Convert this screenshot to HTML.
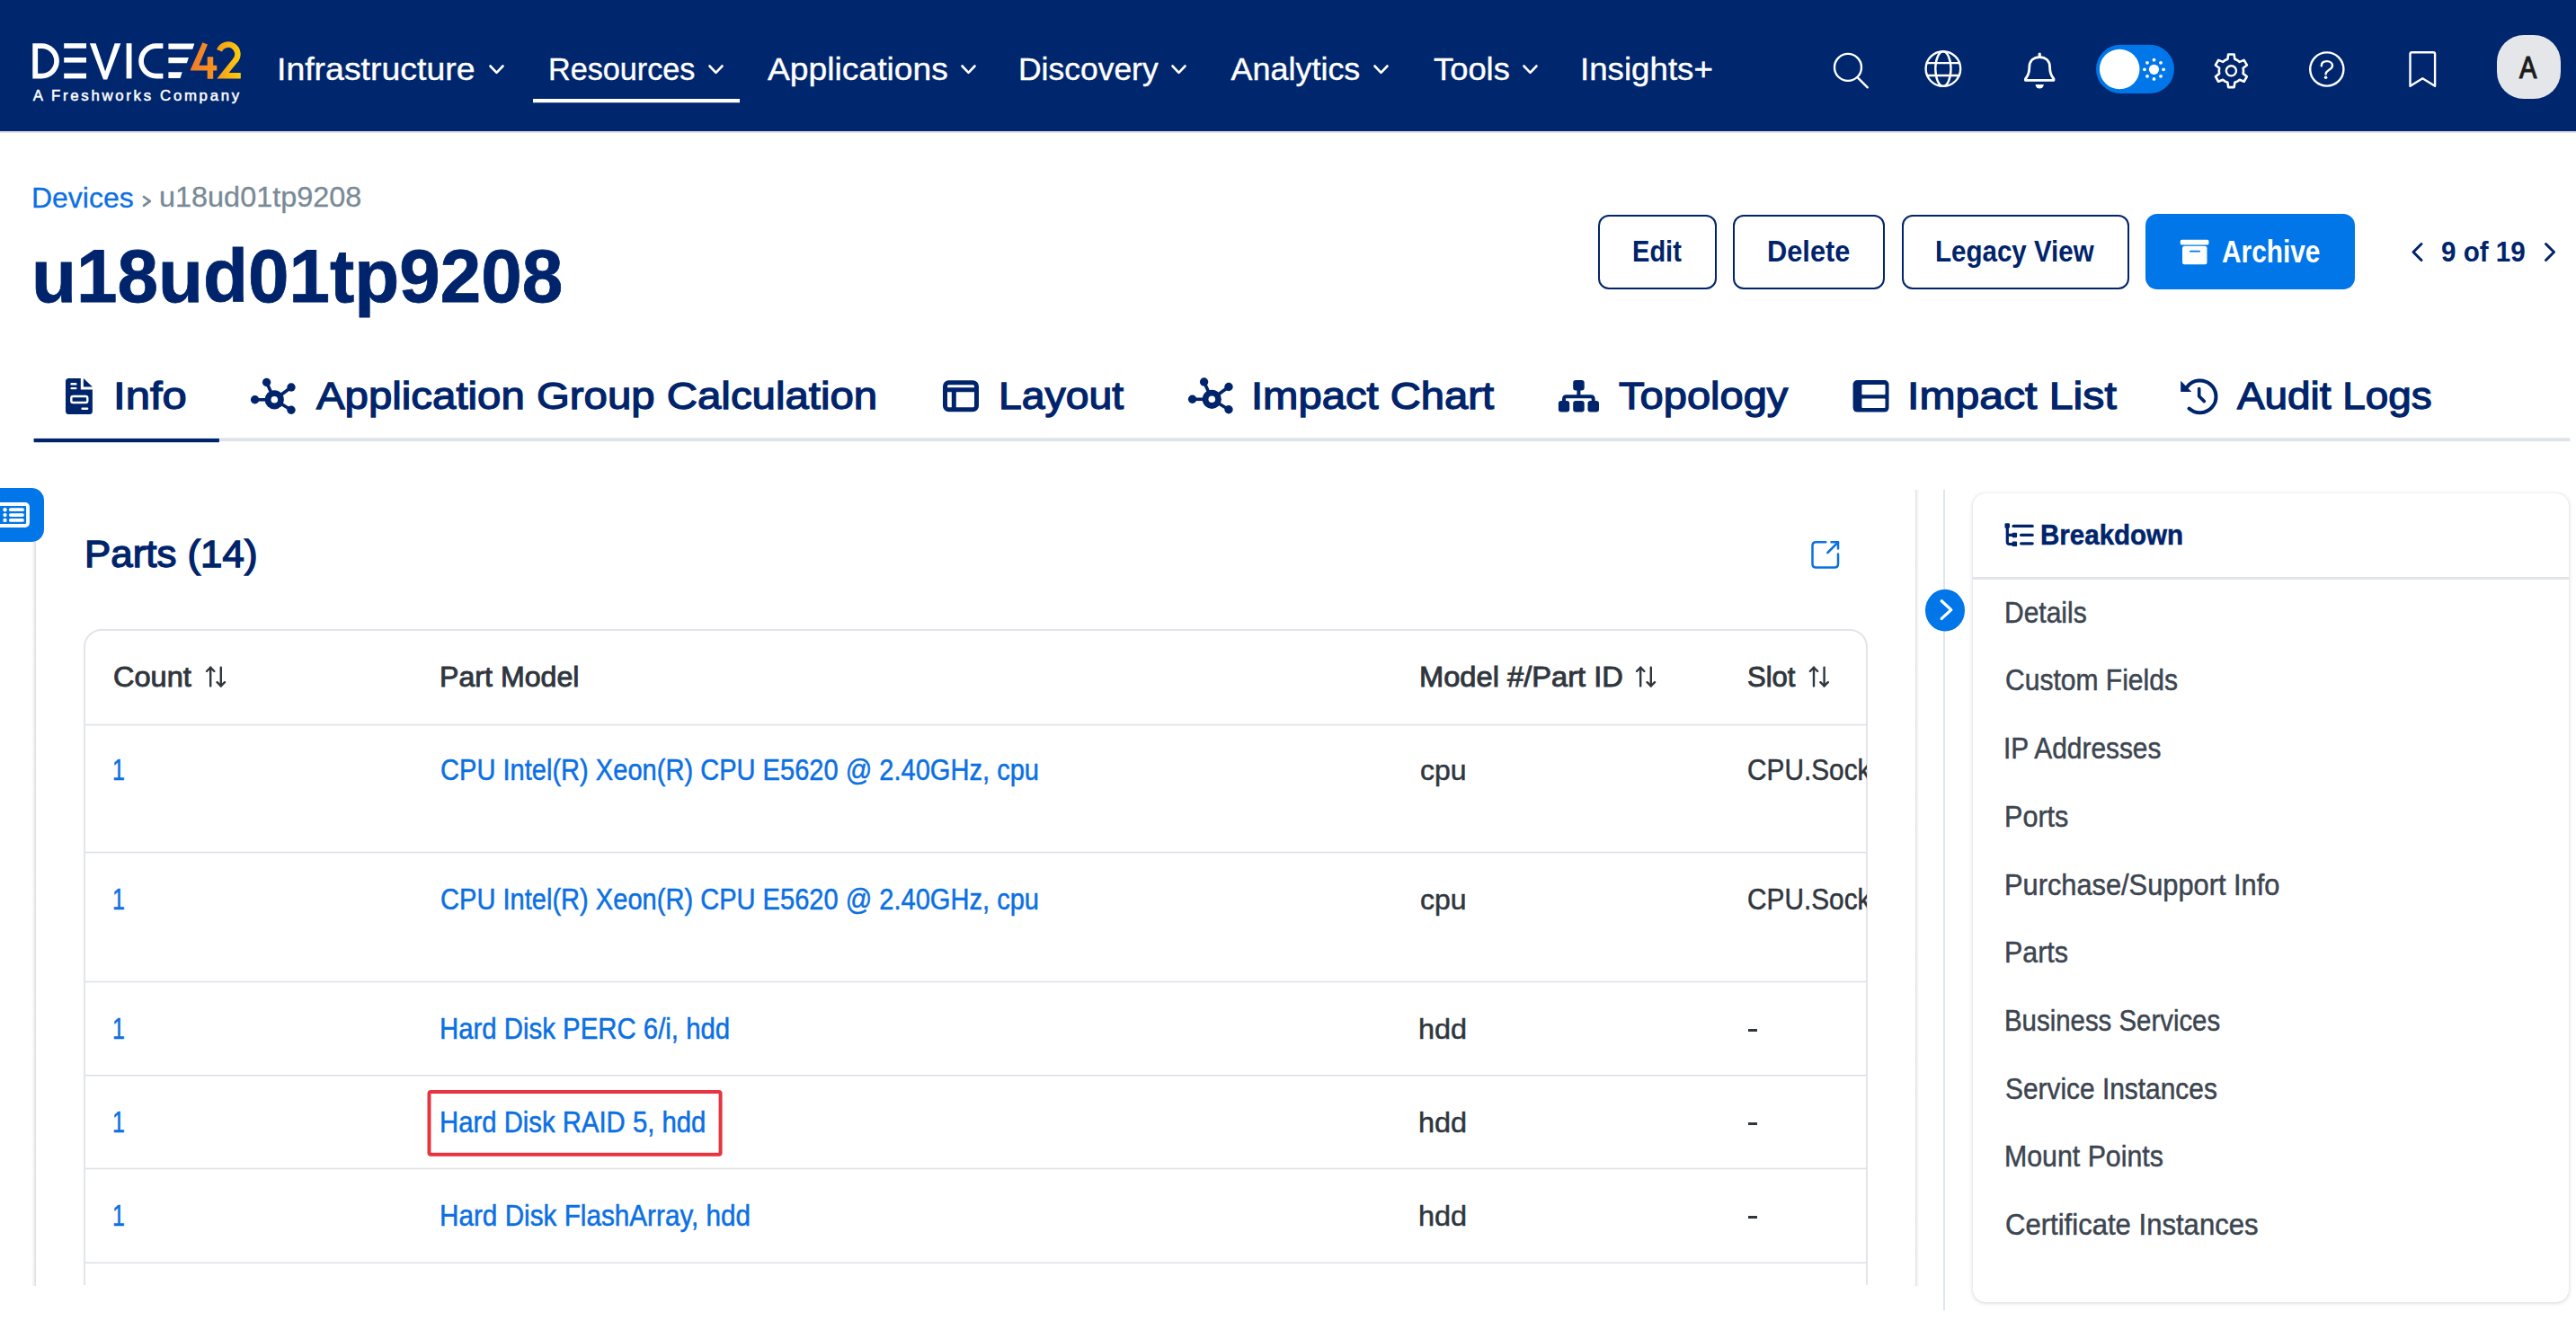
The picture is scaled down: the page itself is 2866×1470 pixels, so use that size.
<!DOCTYPE html>
<html><head><meta charset="utf-8">
<style>
html,body{margin:0;padding:0;}
body{width:2866px;height:1470px;overflow:hidden;position:relative;background:#fff;font-family:"Liberation Sans",sans-serif;}
.t{position:absolute;white-space:nowrap;line-height:1;transform-origin:0 0;font-family:"Liberation Sans",sans-serif;}
.a{position:absolute;}
svg{position:absolute;left:0;top:0;overflow:visible;}
</style></head><body>
<!-- header -->
<div class="a" style="left:0;top:0;width:2866px;height:146px;background:#00266e"></div>
<div class="a" style="left:0;top:146px;width:2866px;height:2px;background:#dfe3e8"></div>
<!-- buttons bg -->
<div class="a" style="left:1777.5px;top:238.5px;width:132px;height:83px;box-sizing:border-box;border:2.3px solid #00246b;border-radius:12px"></div>
<div class="a" style="left:1928px;top:238.5px;width:168.5px;height:83px;box-sizing:border-box;border:2.3px solid #00246b;border-radius:12px"></div>
<div class="a" style="left:2115.5px;top:238.5px;width:253.5px;height:83px;box-sizing:border-box;border:2.3px solid #00246b;border-radius:12px"></div>
<div class="a" style="left:2387px;top:238px;width:233px;height:84px;background:#0076e8;border-radius:13px"></div>
<!-- left tab -->
<div class="a" style="left:-20px;top:543px;width:69px;height:60px;background:#0076e8;border-radius:14px"></div>
<!-- left panel line -->
<div class="a" style="left:35px;top:603px;width:5px;height:827.5px;background:linear-gradient(to right,#ffffff,#eef0f1 60%,#d9dadb)"></div>
<!-- table card -->
<div class="a" style="left:93px;top:700px;width:1985px;height:800px;box-sizing:border-box;border:2px solid #e2e5e9;border-radius:20px;overflow:hidden;clip-path:inset(0 0 70px 0)"></div>
<!-- right column lines -->
<div class="a" style="left:2131px;top:545px;width:4px;height:886px;background:linear-gradient(to right,#d9dadb,#eef0f1 40%,#ffffff)"></div>
<div class="a" style="left:2162px;top:545px;width:2.3px;height:913px;background:#e1e6ec"></div>
<!-- breakdown card -->
<div class="a" style="left:2195px;top:549px;width:663px;height:900px;background:#fff;border-radius:14px;box-shadow:0 1px 5px rgba(0,0,0,0.16),0 0 1px rgba(0,0,0,0.12)"></div>
<div class="a" style="left:2195px;top:642px;width:663px;height:2.5px;background:#e1e5ea"></div>
<!-- avatar -->
<div class="a" style="left:2778px;top:39px;width:71px;height:71px;background:#e4e6ea;border-radius:30px"></div>

<svg width="2866" height="1470" viewBox="0 0 2866 1470">
<defs>
<linearGradient id="g4" x1="0" x2="1" y1="0" y2="0"><stop offset="0" stop-color="#f27a2c"/><stop offset="1" stop-color="#f6951f"/></linearGradient>
<linearGradient id="g2" x1="0" x2="1" y1="0" y2="0"><stop offset="0" stop-color="#f5a11a"/><stop offset="1" stop-color="#ffcc0a"/></linearGradient>
</defs>
<!-- logo -->
<g fill="#fff">
<path fill-rule="evenodd" d="M36.3,48.2 H46.3 A19.6,19.6 0 0 1 46.3,87.4 H36.3 Z M42.1,53.9 V81.7 H46.3 A13.9,13.9 0 0 0 46.3,53.9 Z"/>
<rect x="71.2" y="48.2" width="24.8" height="5.6"/><rect x="71.2" y="64" width="24.8" height="5.6"/><rect x="71.2" y="81.6" width="24.8" height="5.8"/>
<path d="M99.9,48.2 H106.6 L117.1,79.5 L127.6,48.2 H134.3 L119.2,88.5 H115 Z"/>
<rect x="140.6" y="48.2" width="5.9" height="39.2"/>
<path d="M181.4,48.2 H173.8 A19.6,19.6 0 0 0 173.8,87.4 H181.4 V81.7 H173.8 A13.9,13.9 0 0 1 173.8,53.9 H181.4 Z"/>
<path d="M187.4,48.4 H216.3 L214.3,54.7 H187.4 Z M187.4,64.1 H209.9 L207.9,70.2 H187.4 Z M187.4,80.2 H202.7 L200.5,86.9 H187.4 Z"/>
</g>
<path fill="url(#g4)" d="M225.4,47.3 L231,49.5 L221.4,72.8 H230.7 V63.2 H237.2 V72.8 H241.3 V78.5 H237.2 V87.8 H230.7 V78.5 H212 V77.2 Z"/>
<path fill="none" stroke="url(#g2)" stroke-width="6.4" stroke-linejoin="miter" d="M244,56.2 A10.6,10.6 0 1 1 261.5,67.5 L248,84.2 H267.8"/>
<!-- nav chevrons -->
<g fill="none" stroke="#fff" stroke-width="2.6" stroke-linecap="round" stroke-linejoin="round">
<polyline points="545.5,73.5 552.5,80.8 559.5,73.5"/>
<polyline points="789.5,73.5 796.5,80.8 803.5,73.5"/>
<polyline points="1070.5,73.5 1077.5,80.8 1084.5,73.5"/>
<polyline points="1304.5,73.5 1311.5,80.8 1318.5,73.5"/>
<polyline points="1529.5,73.5 1536.5,80.8 1543.5,73.5"/>
<polyline points="1695.5,73.5 1702.5,80.8 1709.5,73.5"/>
</g>
<rect x="593" y="110" width="230" height="4.2" fill="#fff"/>
<!-- header icons -->
<g fill="none" stroke="#fff" stroke-width="2.4" stroke-linecap="round" stroke-linejoin="round">
<circle cx="2056" cy="74.9" r="15"/><line x1="2066.8" y1="86.3" x2="2077.8" y2="97.3"/>
<circle cx="2161.9" cy="76.6" r="19.3"/><ellipse cx="2161.9" cy="76.6" rx="8.6" ry="19.3"/>
<line x1="2144" y1="70.1" x2="2179.8" y2="70.1"/><line x1="2144" y1="84" x2="2179.8" y2="84"/>
<path stroke-width="2.8" d="M2253.4,89.3 H2285 Q2285.4,88.2 2284.4,87 C2281.6,83.6 2280.6,80 2280.6,75 C2280.6,67.8 2276,63.6 2269.2,63.6 C2262.4,63.6 2257.8,67.8 2257.8,75 C2257.8,80 2256.8,83.6 2254,87 Q2253,88.2 2253.4,89.3 Z"/>
<line x1="2269.2" y1="60" x2="2269.2" y2="63.5" stroke-width="3.2"/>
<path stroke-width="2.6" d="M2475.60,67.02 L2478.42,65.79 L2479.17,60.48 L2485.63,60.48 L2486.38,65.79 L2489.20,67.02 L2491.68,68.85 L2496.65,66.84 L2499.88,72.44 L2495.65,75.74 L2496.00,78.80 L2495.65,81.86 L2499.88,85.16 L2496.65,90.76 L2491.68,88.75 L2489.20,90.58 L2486.38,91.81 L2485.63,97.12 L2479.17,97.12 L2478.42,91.81 L2475.60,90.58 L2473.12,88.75 L2468.15,90.76 L2464.92,85.16 L2469.15,81.86 L2468.80,78.80 L2469.15,75.74 L2464.92,72.44 L2468.15,66.84 L2473.12,68.85 Z"/>
<circle cx="2482.4" cy="78.8" r="5.6"/>
<circle cx="2588.8" cy="77" r="18.6"/>
<path d="M2582.8,73.2 C2582.8,69.5 2585.8,68.1 2588.9,68.1 C2592.4,68.1 2595,70.3 2595,73.1 C2595,76 2592.4,77.2 2590.3,78.5 C2588.4,79.7 2587.6,80.6 2587.6,82.4"/>
<path d="M2681.5,95.8 V60 Q2681.5,58.3 2683.4,58.3 H2707.2 Q2709.1,58.3 2709.1,60 V95.8 L2695.3,87.3 Z"/>
</g>
<g fill="#fff">
<path d="M2264.6,94 A4.6,4.6 0 0 0 2273.8,94 Z"/>
<circle cx="2587.6" cy="86.2" r="1.8"/>
</g>
<!-- toggle -->
<rect x="2332" y="49.7" width="87" height="54.3" rx="27.15" fill="#0076e8"/>
<circle cx="2358.2" cy="77" r="22.3" fill="#fff"/>
<g fill="#fff"><circle cx="2396.5" cy="77.3" r="5.6"/>
<circle cx="2396.5" cy="66.7" r="1.9"/><circle cx="2396.5" cy="87.9" r="1.9"/><circle cx="2385.9" cy="77.3" r="1.9"/><circle cx="2407.1" cy="77.3" r="1.9"/>
<circle cx="2389" cy="69.8" r="1.9"/><circle cx="2404" cy="69.8" r="1.9"/><circle cx="2389" cy="84.8" r="1.9"/><circle cx="2404" cy="84.8" r="1.9"/></g>
<!-- pagination chevrons & archive icon -->
<g fill="none" stroke="#00246b" stroke-width="3" stroke-linecap="round" stroke-linejoin="round">
<polyline points="2694,271.5 2685,280.5 2694,289.5"/>
<polyline points="2832.5,271.5 2841.5,280.5 2832.5,289.5"/>
</g>
<g fill="#fff"><rect x="2425.8" y="266.8" width="31.6" height="5.7" rx="1.5"/><rect x="2428" y="273.8" width="27.5" height="20.4" rx="2.5"/></g>
<rect x="2436" y="278.7" width="12" height="1.9" rx="0.9" fill="#0076e8"/>
<!-- tab line -->
<rect x="37.6" y="487.3" width="2822" height="3.8" fill="#dfe3e8"/>
<rect x="37.6" y="488" width="206.3" height="4.2" fill="#00246b"/>
<!-- tab icons -->
<g fill="#00246b">
<path d="M73,424.4 Q73,420.9 76.5,420.9 H89.8 V433.6 H102.9 V457.4 Q102.9,460.9 99.4,460.9 H76.5 Q73,460.9 73,457.4 Z"/>
<path d="M92.9,420.9 L102.9,430.5 H92.9 Z"/>
</g>
<g fill="#fff"><rect x="78.4" y="426.1" width="7.1" height="2.5" rx="1.2"/><rect x="78.4" y="431" width="7.1" height="2.3" rx="1.1"/><rect x="90.4" y="453.4" width="7.9" height="2.5" rx="1.2"/></g>
<rect x="79.3" y="441" width="18" height="7" rx="2" fill="none" stroke="#fff" stroke-width="2.4"/>
<g id="hub">
<g stroke="#00246b" stroke-width="3.6" fill="none"><line x1="305.3" y1="444.8" x2="283.6" y2="444.8"/><line x1="305.3" y1="444.8" x2="296.6" y2="425.5"/><line x1="305.3" y1="444.8" x2="324" y2="431"/><line x1="305.3" y1="444.8" x2="324" y2="456.2"/></g>
<g fill="#00246b"><circle cx="305.3" cy="444.8" r="10.6"/><circle cx="283.6" cy="444.8" r="4.7"/><circle cx="296.6" cy="425.5" r="4.7"/><circle cx="324" cy="431" r="4.7"/><circle cx="324" cy="456.2" r="4.7"/></g>
<circle cx="305.3" cy="444.8" r="3.8" fill="#fff"/>
</g>
<use href="#hub" x="1043" y="-0.5"/>
<g fill="none" stroke="#00246b" stroke-width="5">
<rect x="1051.5" y="425.8" width="35" height="29.9" rx="4"/>
<line x1="1051.5" y1="433.8" x2="1086.5" y2="433.8"/><line x1="1061.3" y1="433.8" x2="1061.3" y2="455.7"/>
</g>
<g fill="#00246b">
<rect x="1750.2" y="423" width="12.5" height="11.5" rx="3"/>
<rect x="1733.9" y="445.9" width="12.3" height="12.7" rx="3"/><rect x="1750.2" y="445.9" width="12.5" height="12.7" rx="3"/><rect x="1766.5" y="445.9" width="12.5" height="12.7" rx="3"/>
</g>
<path d="M1756.4,434 V441.3 M1740,447 V444 Q1740,441.3 1742.7,441.3 H1770 Q1772.7,441.3 1772.7,444 V447" fill="none" stroke="#00246b" stroke-width="4"/>
<rect x="2061.6" y="423" width="39.9" height="35.6" rx="5" fill="#00246b"/>
<rect x="2071.4" y="427.9" width="26.1" height="11.4" rx="1" fill="#fff"/><rect x="2071.4" y="443.4" width="26.1" height="10.6" rx="1" fill="#fff"/>
<g fill="none" stroke="#00246b" stroke-width="4" stroke-linecap="round">
<path d="M2433.6,430.2 A17.9,17.9 0 1 1 2435.5,454.6"/>
<polyline points="2446.7,432.6 2446.7,441 2452.4,446.6" stroke-width="3.6" stroke-linejoin="round"/>
</g>
<path d="M2426.2,423.8 L2438.3,435.9 H2426.2 Z" fill="#00246b"/>
<!-- left tab icon -->
<g fill="none" stroke="#fff" stroke-width="3.8"><rect x="-6" y="561" width="37" height="24" rx="3"/></g>
<g fill="#fff"><circle cx="5.5" cy="567.2" r="2.2"/><circle cx="5.5" cy="573.1" r="2.2"/><circle cx="5.5" cy="578.9" r="2.2"/>
<rect x="9.9" y="565.3" width="17" height="3.8" rx="1.9"/><rect x="9.9" y="571.2" width="17" height="3.8" rx="1.9"/><rect x="9.9" y="577" width="17" height="3.8" rx="1.9"/></g>
<polyline points="160,219 166.8,223.9 160,228.8" fill="none" stroke="#798a96" stroke-width="2.7" stroke-linecap="round" stroke-linejoin="round"/>
<!-- export icon -->
<g fill="none" stroke="#0b70e3" stroke-width="2.5" stroke-linecap="round" stroke-linejoin="round">
<path d="M2031.3,603.2 H2020.5 Q2016.5,603.2 2016.5,607.2 V627.5 Q2016.5,631.5 2020.5,631.5 H2041 Q2045,631.5 2045,627.5 V616.6"/>
<line x1="2033.4" y1="615" x2="2045" y2="603.4"/><polyline points="2037.5,603.2 2045,603.2 2045,610.4"/>
</g>
<!-- table lines -->
<g fill="#dde1e6">
<rect x="95" y="805.8" width="1982" height="1.6"/>
<rect x="95" y="947.7" width="1982" height="1.6"/>
<rect x="95" y="1091.7" width="1982" height="1.6"/>
<rect x="95" y="1195.9" width="1982" height="1.6"/>
<rect x="95" y="1299.6" width="1982" height="1.6"/>
<rect x="95" y="1404.4" width="1982" height="1.6"/>
</g>
<!-- sort icons -->
<g id="sort" fill="none" stroke="#2f363d" stroke-width="2.4" stroke-linecap="round" stroke-linejoin="round">
<line x1="234.2" y1="742.8" x2="234.2" y2="763.4"/><polyline points="230,747 234.2,742.8 238.4,747"/>
<line x1="245.8" y1="742.8" x2="245.8" y2="763.4"/><polyline points="241.6,759.2 245.8,763.4 250,759.2"/>
</g>
<use href="#sort" x="1591" y="0"/>
<use href="#sort" x="1783.8" y="0"/>
<!-- red highlight -->
<rect x="477.5" y="1215" width="324.1" height="69.8" rx="2" fill="none" stroke="#e8343f" stroke-width="4"/>
<!-- chevron circle -->
<ellipse cx="2164" cy="679.2" rx="22" ry="23.4" fill="#0076e8"/>
<polyline points="2160.2,668.8 2170.8,678.6 2160.2,688.4" fill="none" stroke="#fff" stroke-width="3.3" stroke-linecap="round" stroke-linejoin="round"/>
<!-- breakdown icon -->
<g fill="none" stroke="#00246b" stroke-width="3.2" stroke-linecap="round">
<path d="M2233.3,584.6 V603 Q2233.3,605.5 2235.8,605.5 H2241.3 M2233.3,595.4 H2241.3"/>
<line x1="2240" y1="585.4" x2="2261.2" y2="585.4"/><line x1="2248.6" y1="595.4" x2="2261.2" y2="595.4"/><line x1="2248.6" y1="604.8" x2="2261.2" y2="604.8"/>
</g>
<g fill="#00246b"><rect x="2230.5" y="582.3" width="5.5" height="5.5" rx="1.2"/><rect x="2238.6" y="592.7" width="5.5" height="5.5" rx="1.2"/><rect x="2238.6" y="602.6" width="5.5" height="5.5" rx="1.2"/></g>
</svg>
<div class="t" style="left:308.47px;top:59.03px;font-size:35.94px;font-weight:400;color:#fff;transform:scaleX(1.0418);-webkit-text-stroke:0.4px currentColor;">Infrastructure</div>
<div class="t" style="left:609.74px;top:59.03px;font-size:35.94px;font-weight:400;color:#fff;transform:scaleX(0.9518);-webkit-text-stroke:0.4px currentColor;">Resources</div>
<div class="t" style="left:853.50px;top:59.03px;font-size:35.94px;font-weight:400;color:#fff;transform:scaleX(1.0368);-webkit-text-stroke:0.4px currentColor;">Applications</div>
<div class="t" style="left:1133.04px;top:59.03px;font-size:35.94px;font-weight:400;color:#fff;transform:scaleX(0.9871);-webkit-text-stroke:0.4px currentColor;">Discovery</div>
<div class="t" style="left:1369.60px;top:59.03px;font-size:35.94px;font-weight:400;color:#fff;-webkit-text-stroke:0.4px currentColor;">Analytics</div>
<div class="t" style="left:1595.00px;top:59.03px;font-size:35.94px;font-weight:400;color:#fff;transform:scaleX(1.0120);-webkit-text-stroke:0.4px currentColor;">Tools</div>
<div class="t" style="left:1757.94px;top:59.03px;font-size:35.94px;font-weight:400;color:#fff;transform:scaleX(1.0214);-webkit-text-stroke:0.4px currentColor;">Insights+</div>
<div class="t" style="left:36.80px;top:98.84px;font-size:16.81px;font-weight:400;color:#fff;letter-spacing:2.684px;-webkit-text-stroke:0.5px currentColor;">A Freshworks Company</div>
<div class="t" style="left:2802.84px;top:57.75px;font-size:34.49px;font-weight:400;color:#1b1b1b;transform:scaleX(0.8400);-webkit-text-stroke:1.2px currentColor;">A</div>
<div class="t" style="left:35.11px;top:204.36px;font-size:32.17px;font-weight:400;color:#0b70e3;transform:scaleX(0.9938);-webkit-text-stroke:0.3px currentColor;">Devices</div>
<div class="t" style="left:176.59px;top:205.40px;font-size:30.8px;font-weight:400;color:#798a96;transform:scaleX(1.0526);-webkit-text-stroke:0.3px currentColor;">u18ud01tp9208</div>
<div class="t" style="left:34.60px;top:266.37px;font-size:83.54px;font-weight:700;color:#00246b;transform:scaleX(0.9795);-webkit-text-stroke:0.8px currentColor;">u18ud01tp9208</div>
<div class="t" style="left:1816.23px;top:263.70px;font-size:32.9px;font-weight:700;color:#00246b;transform:scaleX(0.8833);">Edit</div>
<div class="t" style="left:1966.13px;top:263.70px;font-size:32.9px;font-weight:700;color:#00246b;transform:scaleX(0.9354);">Delete</div>
<div class="t" style="left:2153.21px;top:263.70px;font-size:32.9px;font-weight:700;color:#00246b;transform:scaleX(0.8974);">Legacy View</div>
<div class="t" style="left:2471.93px;top:262.90px;font-size:34.2px;font-weight:700;color:#fff;transform:scaleX(0.8726);">Archive</div>
<div class="t" style="left:2715.87px;top:264.81px;font-size:31.79px;font-weight:700;color:#00246b;transform:scaleX(0.9313);">9 of 19</div>
<div class="t" style="left:125.60px;top:419.23px;font-size:43.33px;font-weight:400;color:#00246b;transform:scaleX(1.1324);-webkit-text-stroke:1.3px currentColor;">Info</div>
<div class="t" style="left:351.79px;top:419.23px;font-size:43.33px;font-weight:400;color:#00246b;transform:scaleX(1.0935);-webkit-text-stroke:1.3px currentColor;">Application Group Calculation</div>
<div class="t" style="left:1110.79px;top:419.23px;font-size:43.33px;font-weight:400;color:#00246b;transform:scaleX(1.0703);-webkit-text-stroke:1.3px currentColor;">Layout</div>
<div class="t" style="left:1391.73px;top:419.23px;font-size:43.33px;font-weight:400;color:#00246b;transform:scaleX(1.0894);-webkit-text-stroke:1.3px currentColor;">Impact Chart</div>
<div class="t" style="left:1801.00px;top:419.23px;font-size:43.33px;font-weight:400;color:#00246b;transform:scaleX(1.0862);-webkit-text-stroke:1.3px currentColor;">Topology</div>
<div class="t" style="left:2121.67px;top:419.23px;font-size:43.33px;font-weight:400;color:#00246b;transform:scaleX(1.1111);-webkit-text-stroke:1.3px currentColor;">Impact List</div>
<div class="t" style="left:2489.06px;top:419.23px;font-size:43.33px;font-weight:400;color:#00246b;transform:scaleX(1.0585);-webkit-text-stroke:1.3px currentColor;">Audit Logs</div>
<div class="t" style="left:93.83px;top:595.25px;font-size:42.9px;font-weight:400;color:#00246b;transform:scaleX(1.0223);-webkit-text-stroke:1.4px currentColor;">Parts (14)</div>
<div class="t" style="left:125.58px;top:737.49px;font-size:32.03px;font-weight:400;color:#2f363d;transform:scaleX(1.0165);-webkit-text-stroke:0.9px currentColor;">Count</div>
<div class="t" style="left:489.39px;top:737.49px;font-size:32.03px;font-weight:400;color:#2f363d;transform:scaleX(1.0040);-webkit-text-stroke:0.9px currentColor;">Part Model</div>
<div class="t" style="left:1578.56px;top:737.49px;font-size:32.03px;font-weight:400;color:#2f363d;transform:scaleX(1.0200);-webkit-text-stroke:0.9px currentColor;">Model #/Part ID</div>
<div class="t" style="left:1943.53px;top:737.49px;font-size:32.03px;font-weight:400;color:#2f363d;transform:scaleX(0.9673);-webkit-text-stroke:0.9px currentColor;">Slot</div>
<div class="t" style="left:125.05px;top:841.14px;font-size:32.32px;font-weight:400;color:#0b70e3;transform:scaleX(0.7733);-webkit-text-stroke:0.5px currentColor;">1</div>
<div class="t" style="left:490.20px;top:841.14px;font-size:32.32px;font-weight:400;color:#0b70e3;transform:scaleX(0.8996);-webkit-text-stroke:0.5px currentColor;">CPU Intel(R) Xeon(R) CPU E5620 @ 2.40GHz, cpu</div>
<div class="t" style="left:1579.58px;top:842.24px;font-size:31.38px;font-weight:400;color:#2f363d;transform:scaleX(1.0188);-webkit-text-stroke:0.5px currentColor;">cpu</div>
<div class="a" style="left:0;top:0;width:2077px;height:1470px;overflow:hidden"><div class="t" style="left:1943.58px;top:841.14px;font-size:32.32px;font-weight:400;color:#2f363d;transform:scaleX(0.9223);-webkit-text-stroke:0.5px currentColor;">CPU.Sock</div></div>
<div class="t" style="left:125.05px;top:985.04px;font-size:32.32px;font-weight:400;color:#0b70e3;transform:scaleX(0.7733);-webkit-text-stroke:0.5px currentColor;">1</div>
<div class="t" style="left:490.20px;top:985.04px;font-size:32.32px;font-weight:400;color:#0b70e3;transform:scaleX(0.8996);-webkit-text-stroke:0.5px currentColor;">CPU Intel(R) Xeon(R) CPU E5620 @ 2.40GHz, cpu</div>
<div class="t" style="left:1579.58px;top:986.14px;font-size:31.38px;font-weight:400;color:#2f363d;transform:scaleX(1.0188);-webkit-text-stroke:0.5px currentColor;">cpu</div>
<div class="a" style="left:0;top:0;width:2077px;height:1470px;overflow:hidden"><div class="t" style="left:1943.58px;top:985.04px;font-size:32.32px;font-weight:400;color:#2f363d;transform:scaleX(0.9223);-webkit-text-stroke:0.5px currentColor;">CPU.Sock</div></div>
<div class="t" style="left:125.05px;top:1129.24px;font-size:32.32px;font-weight:400;color:#0b70e3;transform:scaleX(0.7733);-webkit-text-stroke:0.5px currentColor;">1</div>
<div class="t" style="left:489.28px;top:1129.24px;font-size:32.32px;font-weight:400;color:#0b70e3;transform:scaleX(0.9088);-webkit-text-stroke:0.5px currentColor;">Hard Disk PERC 6/i, hdd</div>
<div class="t" style="left:1578.33px;top:1129.98px;font-size:31.45px;font-weight:400;color:#2f363d;transform:scaleX(1.0327);-webkit-text-stroke:0.5px currentColor;">hdd</div>
<div class="t" style="left:125.05px;top:1233.24px;font-size:32.32px;font-weight:400;color:#0b70e3;transform:scaleX(0.7733);-webkit-text-stroke:0.5px currentColor;">1</div>
<div class="t" style="left:489.29px;top:1233.24px;font-size:32.32px;font-weight:400;color:#0b70e3;transform:scaleX(0.9068);-webkit-text-stroke:0.5px currentColor;">Hard Disk RAID 5, hdd</div>
<div class="t" style="left:1578.33px;top:1233.98px;font-size:31.45px;font-weight:400;color:#2f363d;transform:scaleX(1.0327);-webkit-text-stroke:0.5px currentColor;">hdd</div>
<div class="t" style="left:125.05px;top:1337.24px;font-size:32.32px;font-weight:400;color:#0b70e3;transform:scaleX(0.7733);-webkit-text-stroke:0.5px currentColor;">1</div>
<div class="t" style="left:489.26px;top:1337.24px;font-size:32.32px;font-weight:400;color:#0b70e3;transform:scaleX(0.9193);-webkit-text-stroke:0.5px currentColor;">Hard Disk FlashArray, hdd</div>
<div class="t" style="left:1578.33px;top:1337.98px;font-size:31.45px;font-weight:400;color:#2f363d;transform:scaleX(1.0327);-webkit-text-stroke:0.5px currentColor;">hdd</div>
<div class="t" style="left:2270.47px;top:580.11px;font-size:30.58px;font-weight:700;color:#00246b;transform:scaleX(0.9654);-webkit-text-stroke:0.5px currentColor;">Breakdown</div>
<div class="t" style="left:2229.69px;top:664.81px;font-size:33.19px;font-weight:400;color:#3c4550;transform:scaleX(0.9040);-webkit-text-stroke:0.5px currentColor;">Details</div>
<div class="t" style="left:2230.59px;top:740.49px;font-size:33.19px;font-weight:400;color:#3c4550;transform:scaleX(0.9052);-webkit-text-stroke:0.5px currentColor;">Custom Fields</div>
<div class="t" style="left:2228.80px;top:816.17px;font-size:33.19px;font-weight:400;color:#3c4550;transform:scaleX(0.9000);-webkit-text-stroke:0.5px currentColor;">IP Addresses</div>
<div class="t" style="left:2229.66px;top:891.85px;font-size:33.19px;font-weight:400;color:#3c4550;transform:scaleX(0.9213);-webkit-text-stroke:0.5px currentColor;">Ports</div>
<div class="t" style="left:2229.64px;top:967.53px;font-size:33.19px;font-weight:400;color:#3c4550;transform:scaleX(0.9281);-webkit-text-stroke:0.5px currentColor;">Purchase/Support Info</div>
<div class="t" style="left:2229.67px;top:1043.21px;font-size:33.19px;font-weight:400;color:#3c4550;transform:scaleX(0.9173);-webkit-text-stroke:0.5px currentColor;">Parts</div>
<div class="t" style="left:2229.73px;top:1118.89px;font-size:33.19px;font-weight:400;color:#3c4550;transform:scaleX(0.8862);-webkit-text-stroke:0.5px currentColor;">Business Services</div>
<div class="t" style="left:2230.60px;top:1194.57px;font-size:33.19px;font-weight:400;color:#3c4550;transform:scaleX(0.9008);-webkit-text-stroke:0.5px currentColor;">Service Instances</div>
<div class="t" style="left:2229.67px;top:1270.25px;font-size:33.19px;font-weight:400;color:#3c4550;transform:scaleX(0.9136);-webkit-text-stroke:0.5px currentColor;">Mount Points</div>
<div class="t" style="left:2230.56px;top:1345.93px;font-size:33.19px;font-weight:400;color:#3c4550;transform:scaleX(0.9368);-webkit-text-stroke:0.5px currentColor;">Certificate Instances</div>
<div class="a" style="left:1945px;top:1144.70px;width:10.3px;height:3.4px;background:#2f363d"></div>
<div class="a" style="left:1945px;top:1248.70px;width:10.3px;height:3.4px;background:#2f363d"></div>
<div class="a" style="left:1945px;top:1352.70px;width:10.3px;height:3.4px;background:#2f363d"></div>
</body></html>
